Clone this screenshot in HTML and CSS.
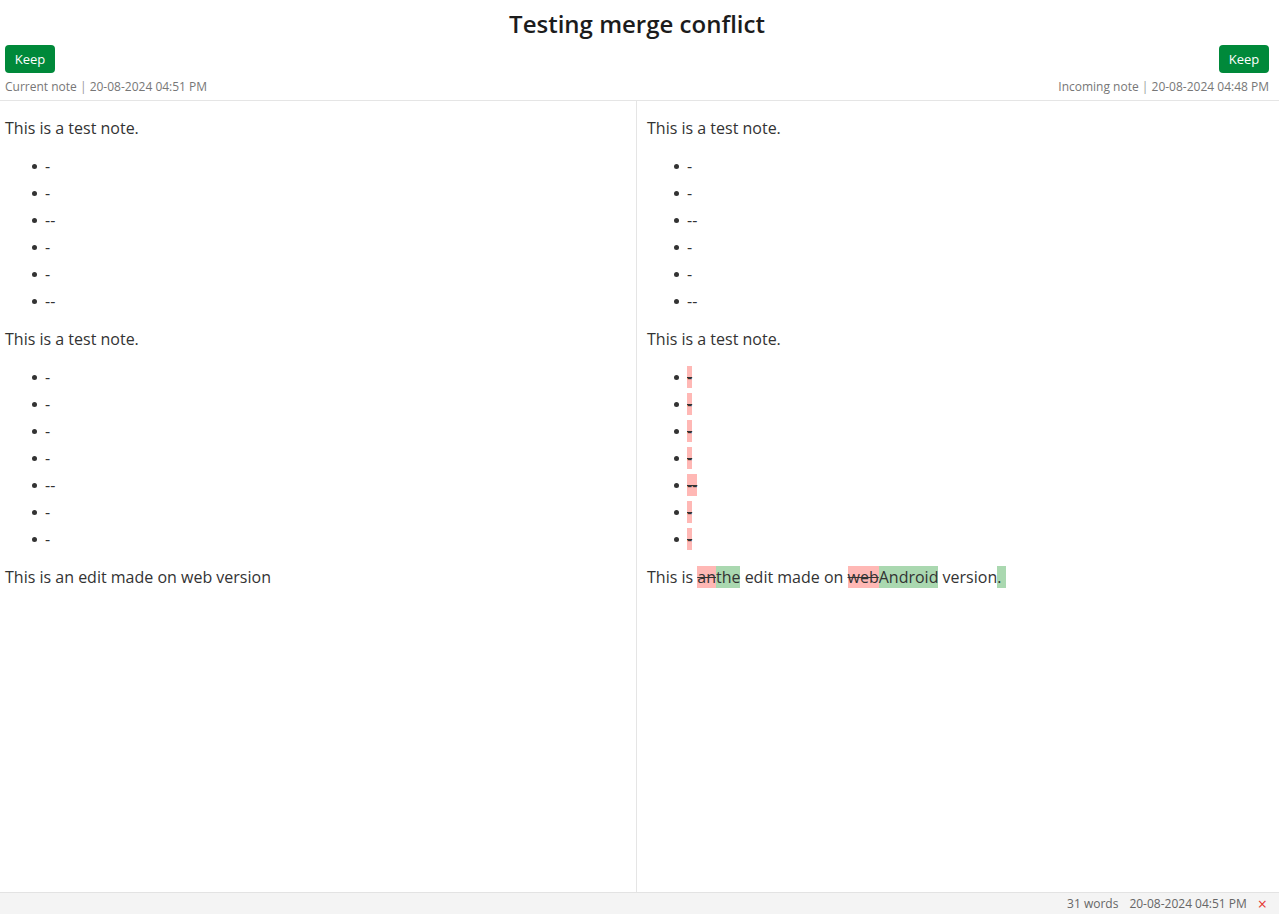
FILE: index.html
```html
<!DOCTYPE html>
<html>
<head>
<meta charset="utf-8">
<link rel="stylesheet" href="styles.css">
</head>
<body>
<div class="app">
  <header class="header">
    <h1 class="title">Testing merge conflict</h1>
    <div class="sides">
      <div class="side">
        <button class="keep">Keep</button>
        <div class="meta">Current note <span class="sep">|</span> 20-08-2024 04:51 PM</div>
      </div>
      <div class="side side-right">
        <button class="keep">Keep</button>
        <div class="meta">Incoming note <span class="sep">|</span> 20-08-2024 04:48 PM</div>
      </div>
    </div>
  </header>
  <main class="panes">
    <section class="pane pane-left">
      <p>This is a test note.</p>
      <ul>
        <li>-</li><li>-</li><li>--</li><li>-</li><li>-</li><li>--</li>
      </ul>
      <p>This is a test note.</p>
      <ul>
        <li>-</li><li>-</li><li>-</li><li>-</li><li>--</li><li>-</li><li>-</li>
      </ul>
      <p>This is an edit made on web version</p>
    </section>
    <section class="pane pane-right">
      <p>This is a test note.</p>
      <ul>
        <li>-</li><li>-</li><li>--</li><li>-</li><li>-</li><li>--</li>
      </ul>
      <p>This is a test note.</p>
      <ul>
        <li><del class="rm">-</del></li>
        <li><del class="rm">-</del></li>
        <li><del class="rm">-</del></li>
        <li><del class="rm">-</del></li>
        <li><del class="rm">--</del></li>
        <li><del class="rm">-</del></li>
        <li><del class="rm">-</del></li>
      </ul>
      <p>This is <del class="rm">an</del><ins class="add">the</ins> edit made on <del class="rm">web</del><ins class="add">Android</ins> version<ins class="add">.&nbsp;</ins></p>
    </section>
  </main>
  <footer class="status">
    <span>31 words</span>
    <span>20-08-2024 04:51 PM</span>
    <span class="close">×</span>
  </footer>
</div>
</body>
</html>
```

FILE: styles.css
```css
* { box-sizing: border-box; }
html, body { margin: 0; padding: 0; height: 100%; }
body {
  font-family: "Open Sans", "Noto Sans", sans-serif;
  color: #333;
  background: #fff;
}
.app {
  height: 914px;
  display: flex;
  flex-direction: column;
}
.header {
  padding: 0 10px 5px 5px;
  border-bottom: 1px solid #e5e5e5;
}
.title {
  margin: 8px 0 5px;
  font-size: 24px;
  line-height: 32px;
  font-weight: 600;
  text-align: center;
  color: #1c1c1c;
}
.sides {
  display: flex;
  justify-content: space-between;
}
.side {
  display: flex;
  flex-direction: column;
  align-items: flex-start;
}
.side-right { align-items: flex-end; }
.keep {
  font-family: inherit;
  font-size: 13px;
  color: #fff;
  background: #00893a;
  border: none;
  border-radius: 4px;
  height: 28px;
  width: 50px;
  padding: 0;
  cursor: pointer;
}
.meta {
  margin-top: 6px;
  font-size: 12px;
  line-height: 16px;
  color: #777;
}
.sep { color: #999; }
.panes {
  flex: 1;
  display: grid;
  grid-template-columns: 636px 1fr;
  min-height: 0;
}
.pane {
  font-size: 16px;
  overflow: hidden;
}
.pane-left { padding: 0 5px; }
.pane-right { padding: 0 10px; border-left: 1px solid #e5e5e5; }
.pane p { margin: 16px 0; line-height: 22px; }
.pane ul { margin: 16px 0; padding-left: 40px; list-style: none; }
.pane li { line-height: 22px; margin-bottom: 5px; position: relative; }
.pane li::before {
  content: "";
  position: absolute;
  left: -13px;
  top: 9px;
  width: 5px;
  height: 5px;
  border-radius: 50%;
  background: #333;
}
.rm {
  background: #ffb8b5;
  text-decoration: line-through;
}
.add {
  background: #aad8b0;
  text-decoration: none;
}
.status {
  height: 22px;
  background: #f4f4f4;
  border-top: 1px solid #e3e3e3;
  display: flex;
  justify-content: flex-end;
  align-items: center;
  gap: 11px;
  padding-right: 12px;
  font-size: 12px;
  color: #666;
}
.close { color: #e53935; font-size: 16px; line-height: 16px; margin-left: 0; }
```
